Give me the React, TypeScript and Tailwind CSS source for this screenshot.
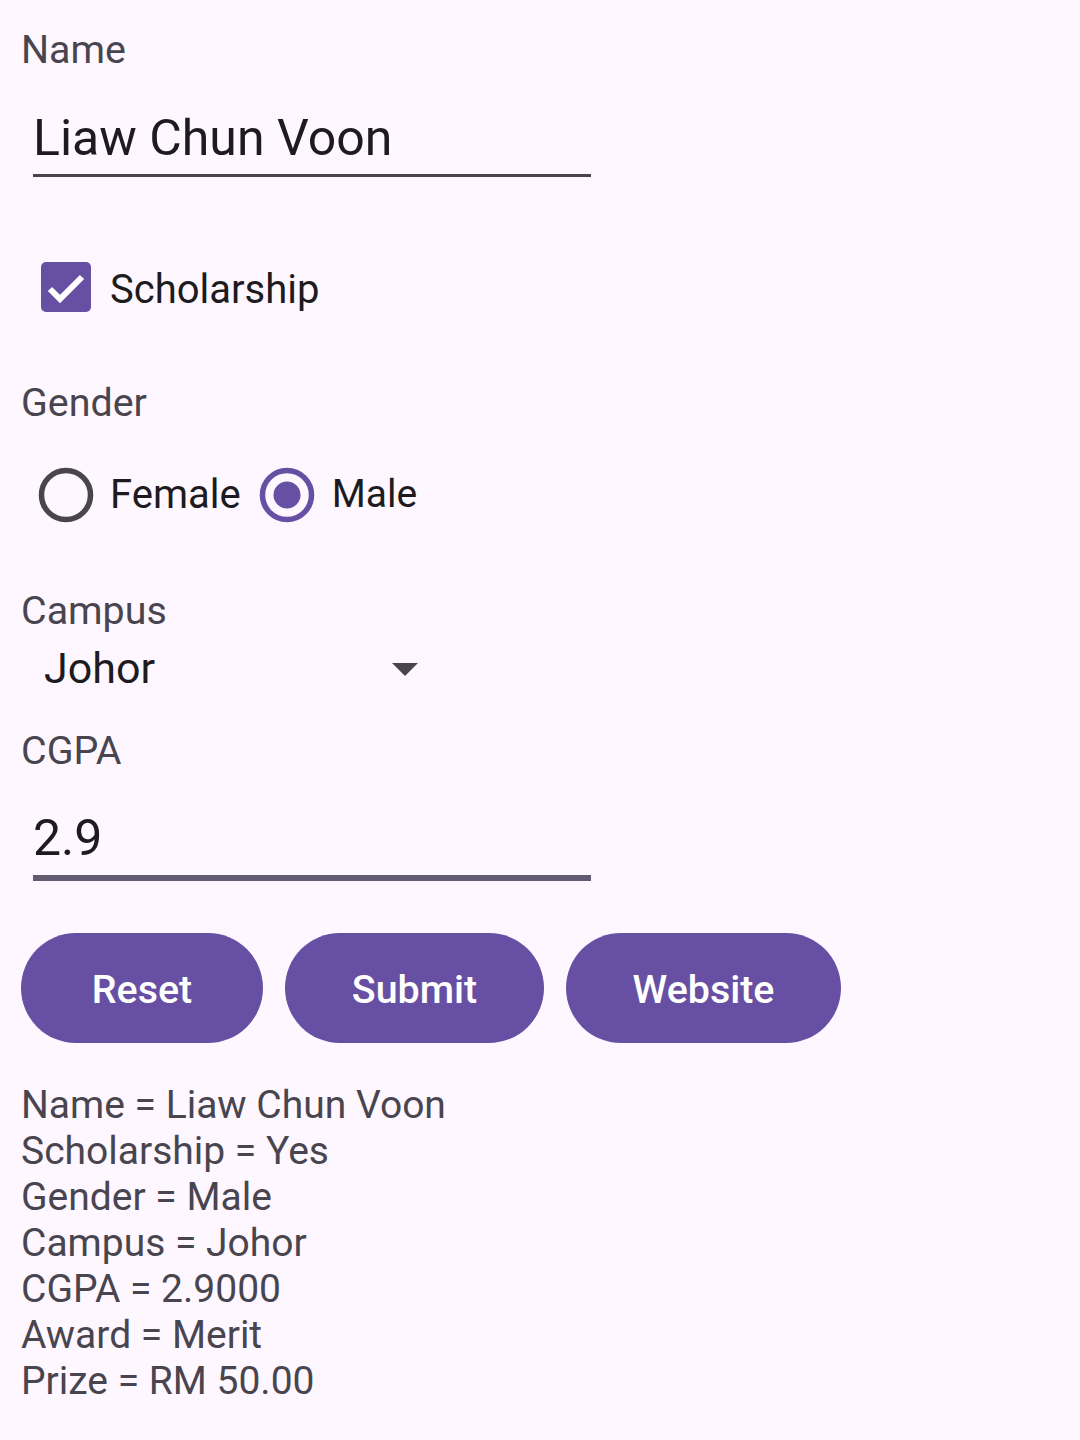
import { useState } from 'react';

const RESULTS = [
  'Name = Liaw Chun Voon',
  'Scholarship = Yes',
  'Gender = Male',
  'Campus = Johor',
  'CGPA = 2.9000',
  'Award = Merit',
  'Prize = RM 50.00',
];

function Radio({ checked }: { checked: boolean }) {
  return (
    <svg width="56" height="56" viewBox="0 0 56 56" className="shrink-0">
      <circle
        cx="28"
        cy="28"
        r="24.5"
        fill="none"
        stroke={checked ? '#6750a4' : '#49454f'}
        strokeWidth="5.5"
      />
      {checked && <circle cx="28" cy="28" r="13.5" fill="#6750a4" />}
    </svg>
  );
}

export default function App() {
  const [name] = useState('Liaw Chun Voon');
  const [gender, setGender] = useState<'Female' | 'Male'>('Male');

  return (
    <div className="min-h-screen bg-[#fef7ff] px-[21px] pt-[27px] font-['Roboto',sans-serif]">
      {/* Name */}
      <div className="text-[39.4px] leading-[46px] text-[#49454f]">Name</div>
      <div className="ml-[12px] mt-[36px] w-[558px]">
        <div className="text-[50px] leading-[59px] text-[#1d1b20]">{name}</div>
        <div className="mt-[6px] h-[3px] bg-[#49454f]" />
      </div>

      {/* Scholarship */}
      <div className="mt-[85px] flex items-start">
        <div className="ml-[20px] flex h-[50px] w-[50px] items-center justify-center rounded-[5px] bg-[#6750a4]">
          <svg width="50" height="50" viewBox="0 0 50 50">
            <path d="M9 27 L19 37 L41 15" fill="none" stroke="#ffffff" strokeWidth="6" />
          </svg>
        </div>
        <div className="ml-[19px] mt-[4px] text-[40px] leading-[47px] text-[#1d1b20]">Scholarship</div>
      </div>

      {/* Gender */}
      <div className="mt-[67px] text-[39.4px] leading-[46px] text-[#49454f]">Gender</div>
      <div className="mt-[41px] flex items-start">
        <button className="ml-[17px] flex items-start" onClick={() => setGender('Female')}>
          <Radio checked={gender === 'Female'} />
          <span className="ml-[16px] mt-[4px] text-[40px] leading-[47px] text-[#1d1b20]">Female</span>
        </button>
        <button className="ml-[18px] flex items-start" onClick={() => setGender('Male')}>
          <Radio checked={gender === 'Male'} />
          <span className="ml-[17px] mt-[4px] text-[39px] leading-[47px] text-[#1d1b20]">Male</span>
        </button>
      </div>

      {/* Campus */}
      <div className="mt-[65px] text-[39.4px] leading-[46px] text-[#49454f]">Campus</div>
      <div className="mt-[9px] flex w-[397px] items-start justify-between">
        <span className="ml-[23px] text-[43px] leading-[50px] text-[#1d1b20]">Johor</span>
        <svg width="26" height="13" viewBox="0 0 26 13" className="mt-[20px]">
          <polygon points="0,0 26,0 13,13" fill="#49454f" />
        </svg>
      </div>

      {/* CGPA */}
      <div className="mt-[35px] text-[39.4px] leading-[46px] text-[#49454f]">CGPA</div>
      <div className="ml-[12px] mt-[35px] w-[558px]">
        <div className="text-[50px] leading-[59px] text-[#1d1b20]">2.9</div>
        <div className="mt-[7px] h-[6px] bg-[#625b71]" />
      </div>

      {/* Buttons */}
      <div className="mt-[52px] flex gap-[22px]">
        <button className="h-[110px] w-[242px] rounded-full bg-[#6750a4] pt-[4px] text-[39.4px] font-medium text-white">
          Reset
        </button>
        <button className="h-[110px] w-[259px] rounded-full bg-[#6750a4] pt-[4px] text-[39.4px] font-medium text-white">
          Submit
        </button>
        <button className="h-[110px] w-[275px] rounded-full bg-[#6750a4] pt-[4px] text-[39.4px] font-medium text-white">
          Website
        </button>
      </div>

      {/* Output */}
      <div className="mt-[39px] pb-[40px] text-[39px] leading-[46px] text-[#49454f]">
        {RESULTS.map((line) => (
          <div key={line}>{line}</div>
        ))}
      </div>
    </div>
  );
}
